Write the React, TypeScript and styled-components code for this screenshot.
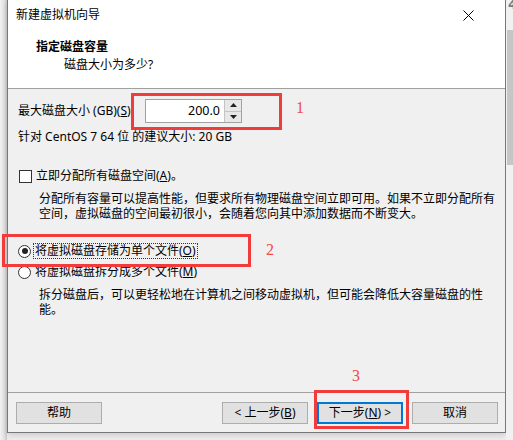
import styled, { createGlobalStyle } from "styled-components";

const GlobalStyle = createGlobalStyle`
  html, body {
    margin: 0;
    padding: 0;
    background: #ededed;
  }
  body {
    font-family: "Noto Sans", "Noto Sans CJK SC", sans-serif;
    font-size: 12px;
    color: #000;
  }
  #root {
    width: 513px;
    height: 440px;
    overflow: hidden;
  }
`;

const Page = styled.div`
  position: relative;
  display: flex;
  align-items: flex-start;
  width: 513px;
  height: 440px;
`;

const LeftEdge = styled.div`
  width: 7px;
  height: 440px;
  background: linear-gradient(to right, #f2f2f2, #e2e2e2 60%, #c9c9c9);
`;

const RightEdge = styled.div`
  flex: 1;
  height: 440px;
  display: flex;
  flex-direction: column;
  background: #f1f1f1;
  overflow: hidden;
`;

const EdgeGlyph = styled.div`
  height: 30px;
  padding-left: 2px;
  color: #6f7c8a;
  font-family: "DejaVu Sans", sans-serif;
  font-size: 13px;
  line-height: 10px;
  font-weight: bold;
`;

const EdgeThumb = styled.div`
  height: 135px;
  margin-left: 1px;
  background: #c6c6c6;
`;

const Dialog = styled.div`
  width: 497px;
  height: 432px;
  border: 1px solid #777;
  border-top: none;
  background: #f0f0f0;
  display: flex;
  flex-direction: column;
  box-shadow: 0 2px 6px rgba(0, 0, 0, 0.15);
`;

const TitleBar = styled.div`
  height: 30px;
  background: #fff;
  display: flex;
  align-items: center;
  justify-content: space-between;
  padding-left: 8px;
`;

const TitleText = styled.span`
  line-height: 16px;
`;

const CloseButton = styled.div`
  width: 46px;
  height: 30px;
  margin-right: 14px;
  display: flex;
  align-items: center;
  justify-content: center;
`;

const Header = styled.div`
  height: 59px;
  box-sizing: border-box;
  background: #fff;
  border-bottom: 1px solid #a0a0a0;
  padding: 9px 0 0 28px;
`;

const Heading = styled.div`
  font-weight: bold;
  line-height: 16px;
`;

const SubHeading = styled.div`
  margin-top: 2px;
  padding-left: 28px;
  line-height: 16px;
`;

const Body = styled.div`
  flex: 1;
  padding-left: 10px;
  display: flex;
  flex-direction: column;
  white-space: nowrap;
`;

const SizeRow = styled.div`
  margin-top: 10px;
  display: flex;
  align-items: center;
  height: 24px;
`;

const FieldLabel = styled.span`
  width: 127px;
  line-height: 16px;
`;

const SpinBox = styled.div`
  display: flex;
  width: 97px;
  height: 24px;
  box-sizing: border-box;
  border: 1px solid #a2a2a2;
  background: #fff;
`;

const SpinField = styled.div`
  flex: 1;
  text-align: right;
  padding-right: 4px;
  line-height: 22px;
  font-size: 12.5px;
`;

const SpinButtons = styled.div`
  width: 16px;
  display: flex;
  flex-direction: column;
  border-left: 1px solid #c4c4c4;
`;

const SpinHalf = styled.div<{ $down?: boolean }>`
  flex: 1;
  background: #e8e8e8;
  display: flex;
  align-items: center;
  justify-content: center;
  border-top: ${(p) => (p.$down ? "1px solid #c4c4c4" : "none")};
`;

const Hint = styled.div`
  margin-top: 6px;
  line-height: 16px;
`;

const OptionRow = styled.div<{ $gap: number }>`
  margin-top: ${(p) => p.$gap}px;
  display: flex;
  align-items: center;
  height: 16px;
`;

const CheckBox = styled.span`
  flex: none;
  width: 13px;
  height: 13px;
  box-sizing: border-box;
  border: 1px solid #333;
  background: #fff;
  margin: 0 3px 0 1px;
`;

const Radio = styled.span<{ $checked?: boolean }>`
  flex: none;
  position: relative;
  width: 13px;
  height: 13px;
  box-sizing: border-box;
  border: 1px solid #333;
  border-radius: 50%;
  background: #fff;
  margin: 0 3px 0 0;
  &::after {
    content: "";
    display: ${(p) => (p.$checked ? "block" : "none")};
    position: absolute;
    left: 2.5px;
    top: 2.5px;
    width: 6px;
    height: 6px;
    border-radius: 50%;
    background: #222;
  }
`;

const OptionText = styled.span<{ $focused?: boolean }>`
  line-height: 14px;
  padding: 0 1px;
  border: 1px dotted ${(p) => (p.$focused ? "#333" : "transparent")};
  margin-left: -1px;
`;

const Description = styled.div`
  margin-top: 8px;
  padding-left: 21px;
  line-height: 14.5px;
`;

const Footer = styled.div`
  height: 40px;
  box-sizing: border-box;
  border-top: 1px solid #a0a0a0;
  padding: 9px 7px 0 8px;
  display: flex;
  gap: 9px;
`;

const Button = styled.div<{ $primary?: boolean; $pushRight?: boolean }>`
  width: 86px;
  height: 22px;
  box-sizing: border-box;
  background: #e1e1e1;
  border: ${(p) => (p.$primary ? "2px solid #0078d7" : "1px solid #adadad")};
  display: flex;
  align-items: center;
  justify-content: center;
  margin-left: ${(p) => (p.$pushRight ? "auto" : "0")};
  line-height: 16px;
`;

const Mark = styled.div<{ $x: number; $y: number; $w: number; $h: number }>`
  position: absolute;
  left: ${(p) => p.$x}px;
  top: ${(p) => p.$y}px;
  width: ${(p) => p.$w}px;
  height: ${(p) => p.$h}px;
  box-sizing: border-box;
  border: 3px solid #f23c3c;
  pointer-events: none;
`;

const MarkNumber = styled.span<{ $x: number; $y: number }>`
  position: absolute;
  left: ${(p) => p.$x}px;
  top: ${(p) => p.$y}px;
  font-family: "Liberation Serif", serif;
  font-size: 16px;
  line-height: 16px;
  color: #ee4a4a;
`;

export default function App() {
  return (
    <Page>
      <GlobalStyle />
      <LeftEdge />
      <Dialog>
        <TitleBar>
          <TitleText>新建虚拟机向导</TitleText>
          <CloseButton>
            <svg width="11" height="11" viewBox="0 0 11 11">
              <path d="M0.5 0.5 L10.5 10.5 M10.5 0.5 L0.5 10.5" stroke="#000" strokeWidth="1" />
            </svg>
          </CloseButton>
        </TitleBar>
        <Header>
          <Heading>指定磁盘容量</Heading>
          <SubHeading>磁盘大小为多少?</SubHeading>
        </Header>
        <Body>
          <SizeRow>
            <FieldLabel>
              最大磁盘大小 (GB)(<u>S</u>):
            </FieldLabel>
            <SpinBox>
              <SpinField>200.0</SpinField>
              <SpinButtons>
                <SpinHalf>
                  <svg width="7" height="4" viewBox="0 0 7 4">
                    <path d="M3.5 0 L7 4 L0 4 Z" fill="#222" />
                  </svg>
                </SpinHalf>
                <SpinHalf $down>
                  <svg width="7" height="4" viewBox="0 0 7 4">
                    <path d="M0 0 L7 0 L3.5 4 Z" fill="#222" />
                  </svg>
                </SpinHalf>
              </SpinButtons>
            </SpinBox>
          </SizeRow>
          <Hint>针对 CentOS 7 64 位 的建议大小: 20 GB</Hint>
          <OptionRow $gap={23}>
            <CheckBox />
            <OptionText>
              立即分配所有磁盘空间(<u>A</u>)。
            </OptionText>
          </OptionRow>
          <Description>
            分配所有容量可以提高性能，但要求所有物理磁盘空间立即可用。如果不立即分配所有
            <br />
            空间，虚拟磁盘的空间最初很小，会随着您向其中添加数据而不断变大。
          </Description>
          <OptionRow $gap={22}>
            <Radio $checked />
            <OptionText $focused>
              将虚拟磁盘存储为单个文件(<u>O</u>)
            </OptionText>
          </OptionRow>
          <OptionRow $gap={5}>
            <Radio />
            <OptionText>
              将虚拟磁盘拆分成多个文件(<u>M</u>)
            </OptionText>
          </OptionRow>
          <Description>
            拆分磁盘后，可以更轻松地在计算机之间移动虚拟机，但可能会降低大容量磁盘的性
            <br />
            能。
          </Description>
        </Body>
        <Footer>
          <Button>帮助</Button>
          <Button $pushRight>
            &lt; 上一步(<u>B</u>)
          </Button>
          <Button $primary>
            下一步(<u>N</u>) &gt;
          </Button>
          <Button>取消</Button>
        </Footer>
      </Dialog>
      <RightEdge>
        <EdgeGlyph>4</EdgeGlyph>
        <EdgeThumb />
      </RightEdge>

      <Mark $x={131} $y={93} $w={151} $h={37} />
      <MarkNumber $x={296} $y={100}>1</MarkNumber>
      <Mark $x={2} $y={234} $w={249} $h={33} />
      <MarkNumber $x={266} $y={242}>2</MarkNumber>
      <Mark $x={314} $y={390} $w={95} $h={39} />
      <MarkNumber $x={352} $y={368}>3</MarkNumber>
    </Page>
  );
}
